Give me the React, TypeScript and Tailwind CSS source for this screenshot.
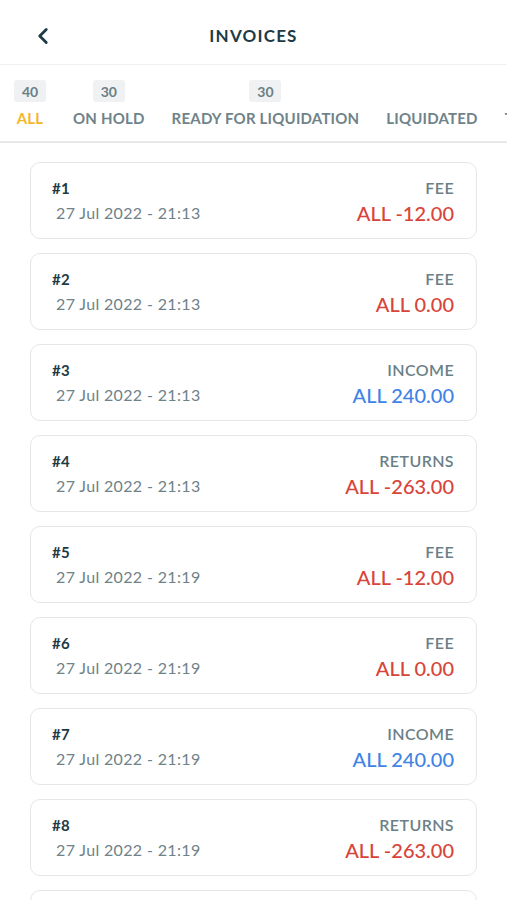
import React from 'react';
import { ChevronLeft } from 'lucide-react';

type Invoice = {
  id: number;
  date: string;
  kind: 'FEE' | 'INCOME' | 'RETURNS';
  amount: string;
};

const invoices: Invoice[] = [
  { id: 1, date: '27 Jul 2022 - 21:13', kind: 'FEE', amount: 'ALL -12.00' },
  { id: 2, date: '27 Jul 2022 - 21:13', kind: 'FEE', amount: 'ALL 0.00' },
  { id: 3, date: '27 Jul 2022 - 21:13', kind: 'INCOME', amount: 'ALL 240.00' },
  { id: 4, date: '27 Jul 2022 - 21:13', kind: 'RETURNS', amount: 'ALL -263.00' },
  { id: 5, date: '27 Jul 2022 - 21:19', kind: 'FEE', amount: 'ALL -12.00' },
  { id: 6, date: '27 Jul 2022 - 21:19', kind: 'FEE', amount: 'ALL 0.00' },
  { id: 7, date: '27 Jul 2022 - 21:19', kind: 'INCOME', amount: 'ALL 240.00' },
  { id: 8, date: '27 Jul 2022 - 21:19', kind: 'RETURNS', amount: 'ALL -263.00' },
  { id: 9, date: '27 Jul 2022 - 21:19', kind: 'FEE', amount: 'ALL -12.00' },
];

const tabs = [
  { label: 'ALL', count: '40', active: true },
  { label: 'ON HOLD', count: '30' },
  { label: 'READY FOR LIQUIDATION', count: '30' },
  { label: 'LIQUIDATED' },
  { label: 'TOTAL' },
];

function InvoiceCard({ invoice }: { invoice: Invoice }) {
  const isIncome = invoice.kind === 'INCOME';
  return (
    <div className="flex h-[77px] shrink-0 items-center justify-between rounded-[10px] border border-[#e4e7e8] bg-white pl-[21px] pr-[22px]">
      <div className="flex flex-col">
        <span className="text-[15px] font-bold leading-[20px] tracking-[0.3px] text-[#1d3a45]">#{invoice.id}</span>
        <span className="ml-[4px] mt-[5px] text-[16px] leading-[20px] tracking-[0.35px] text-[#6f8288]">
          {invoice.date}
        </span>
      </div>
      <div className="flex flex-col items-end">
        <span className="text-[16px] font-semibold leading-[20px] tracking-[0.4px] text-[#6b7f86]">{invoice.kind}</span>
        <span
          className={`mt-[4px] text-[20px] font-medium leading-[22px] ${isIncome ? 'text-[#3f84e5]' : 'text-[#d8443a]'}`}
        >
          {invoice.amount}
        </span>
      </div>
    </div>
  );
}

export default function App() {
  return (
    <div className="flex h-[900px] w-[507px] flex-col overflow-hidden bg-white font-['Lato',sans-serif]">
      {/* header */}
      <div className="relative flex h-[65px] shrink-0 items-center justify-center border-b border-[#f0f1f1] pt-[8px]">
        <ChevronLeft className="absolute left-[30px] top-[23px] h-[26px] w-[26px] text-[#1d3a45]" strokeWidth={2.6} />
        <h1 className="text-[17px] font-bold tracking-[1.2px] text-[#1d3a45]">INVOICES</h1>
      </div>

      {/* tabs */}
      <div className="flex h-[78px] shrink-0 items-end gap-[27px] overflow-hidden whitespace-nowrap border-b-2 border-[#e6e8e9] pb-[13px] pl-[14px]">
        {tabs.map((t) => (
          <div key={t.label} className="flex shrink-0 flex-col items-center">
            {t.count ? (
              <span className="mb-[6px] flex h-[22px] w-[32px] items-center justify-center rounded-[3px] bg-[#eff1f2] text-[14px] font-bold text-[#6b7f86]">
                {t.count}
              </span>
            ) : (
              <span className="mb-[6px] h-[22px]" />
            )}
            <span
              className={`text-[15px] font-bold leading-[20px] tracking-[0.2px] ${t.active ? 'text-[#f3b72a]' : 'text-[#6f8389]'}`}
            >
              {t.label}
            </span>
          </div>
        ))}
      </div>

      {/* list */}
      <div className="flex flex-col gap-[14px] px-[30px] pt-[19px]">
        {invoices.map((inv) => (
          <InvoiceCard key={inv.id} invoice={inv} />
        ))}
      </div>
    </div>
  );
}
